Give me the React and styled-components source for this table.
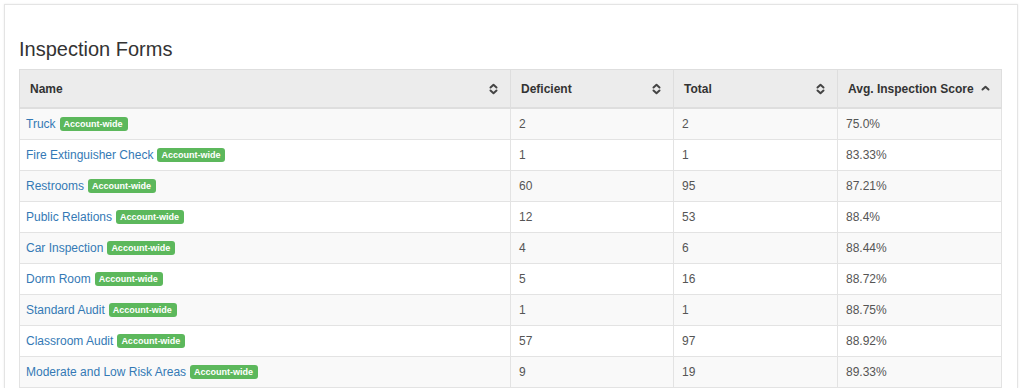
import React from 'react'
import styled, { createGlobalStyle } from 'styled-components'

const GlobalStyle = createGlobalStyle`
  body {
    margin: 0;
    background: #fff;
    font-family: "Liberation Sans", Arial, sans-serif;
    color: #333;
  }
`

const forms = [
  { name: 'Truck', deficient: 2, total: 2, score: '75.0%' },
  { name: 'Fire Extinguisher Check', deficient: 1, total: 1, score: '83.33%' },
  { name: 'Restrooms', deficient: 60, total: 95, score: '87.21%' },
  { name: 'Public Relations', deficient: 12, total: 53, score: '88.4%' },
  { name: 'Car Inspection', deficient: 4, total: 6, score: '88.44%' },
  { name: 'Dorm Room', deficient: 5, total: 16, score: '88.72%' },
  { name: 'Standard Audit', deficient: 1, total: 1, score: '88.75%' },
  { name: 'Classroom Audit', deficient: 57, total: 97, score: '88.92%' },
  { name: 'Moderate and Low Risk Areas', deficient: 9, total: 19, score: '89.33%' },
]

const columns = [
  { label: 'Name', width: 491, sort: 'both' },
  { label: 'Deficient', width: 163, sort: 'both' },
  { label: 'Total', width: 164, sort: 'both' },
  { label: 'Avg. Inspection Score', width: 164, sort: 'asc' },
]

//Sort arrows
const SortIcon = ({ type }) => (
  <svg width="9" height="12" viewBox="0 0 9 12">
    <g fill="none" stroke="#444" strokeWidth="2" strokeLinecap="round" strokeLinejoin="round">
      <path d="M1.5 4.5 L4.5 1.8 L7.5 4.5" />
      {type === 'both' && <path d="M1.5 7.5 L4.5 10.2 L7.5 7.5" />}
    </g>
  </svg>
)

const App = () => {
  return (
    <>
      <GlobalStyle />
      <Panel>
        <Title>Inspection Forms</Title>
        <Table>
          <colgroup>
            {columns.map((col) => (
              <col key={col.label} style={{ width: col.width }} />
            ))}
          </colgroup>
          <thead>
            <tr>
              {columns.map((col) => (
                <HeadCell key={col.label}>
                  <HeadInner>
                    <span>{col.label}</span>
                    <SortWrap $asc={col.sort === 'asc'}>
                      <SortIcon type={col.sort} />
                    </SortWrap>
                  </HeadInner>
                </HeadCell>
              ))}
            </tr>
          </thead>
          <tbody>
            {forms.map((form) => (
              <Row key={form.name}>
                <NameCell>
                  <FormLink href="#">{form.name}</FormLink>
                  <Badge>Account-wide</Badge>
                </NameCell>
                <Cell>{form.deficient}</Cell>
                <Cell>{form.total}</Cell>
                <Cell>{form.score}</Cell>
              </Row>
            ))}
          </tbody>
        </Table>
      </Panel>
    </>
  )
}

const Panel = styled.div`
  margin: 4px 6px 0 4px;
  padding: 33px 15px 0 14px;
  border: 1px solid #e4e4e4;
  border-bottom: none;
  box-shadow: 0 0 2px rgba(0, 0, 0, 0.08);
  height: 384px;
  box-sizing: border-box;
`
const Title = styled.h3`
  margin: 0 0 9px;
  font-size: 20px;
  line-height: 22px;
  font-weight: 400;
  color: #333;
`
const Table = styled.table`
  width: 982px;
  border-collapse: collapse;
  table-layout: fixed;
  font-size: 12px;
`
const HeadCell = styled.th`
  height: 37px;
  padding: 0 10px;
  background: #ececec;
  border: 1px solid #dedede;
  border-bottom-width: 2px;
  text-align: left;
  font-weight: 700;
  color: #333;
`
const HeadInner = styled.div`
  display: flex;
  align-items: center;
  justify-content: space-between;
`
const SortWrap = styled.span`
  display: flex;
  margin-right: ${(p) => (p.$asc ? '1px' : '2px')};
  margin-top: ${(p) => (p.$asc ? '5px' : '0')};
`
const Row = styled.tr`
  background: #fff;
  &:nth-child(odd) {
    background: #f9f9f9;
  }
`
const Cell = styled.td`
  height: 30px;
  padding: 0 8px;
  border: 1px solid #e3e3e3;
  color: #555;
  white-space: nowrap;
`
const NameCell = styled(Cell)`
  padding: 0 6px;
`
const FormLink = styled.a`
  color: #3479b5;
  text-decoration: none;
`
const Badge = styled.span`
  display: inline-block;
  margin-left: 4px;
  padding: 2px 5px 2px 4px;
  border-radius: 3px;
  background: #5cb85c;
  color: #fff;
  font-size: 9px;
  font-weight: 700;
  line-height: 10px;
  vertical-align: 1px;
`

export default App
